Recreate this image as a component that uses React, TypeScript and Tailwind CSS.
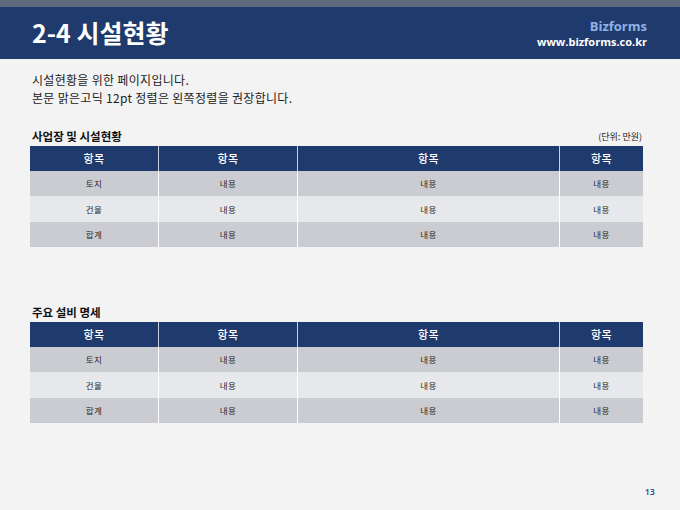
import React from "react";

const KR = { fontFamily: '"Noto Sans CJK KR", "Noto Sans", sans-serif' };
const EN = { fontFamily: '"Open Sans", "Noto Sans", sans-serif' };

const cols = "grid grid-cols-[128px_139px_262px_84px]";

function Table() {
  const rows = [
    { label: "토지", bg: "bg-[#cbccd1]", h: "h-[25px]" },
    { label: "건물", bg: "bg-[#e7e8eb]", h: "h-[26px]" },
    { label: "합계", bg: "bg-[#cbccd1]", h: "h-[25px]" },
  ];
  return (
    <div className="w-[613px]">
      <div className={`${cols} h-[25px] bg-[#1f3a6c]`}>
        {[0, 1, 2, 3].map((i) => (
          <div
            key={i}
            className={`flex items-center justify-center text-white text-[11px] font-medium tracking-[0.5px] ${
              i > 0 ? "border-l border-[#c9d1de]" : ""
            }`}
          >
            항목
          </div>
        ))}
      </div>
      {rows.map((r) => (
        <div key={r.label} className={`${cols} ${r.h} ${r.bg}`}>
          {[r.label, "내용", "내용", "내용"].map((t, i) => (
            <div
              key={i}
              className={`flex items-center justify-center text-[8.5px] tracking-[0.5px] text-[#2a2a2a] ${
                i > 0 ? "border-l border-white" : ""
              }`}
            >
              {t}
            </div>
          ))}
        </div>
      ))}
    </div>
  );
}

export default function App() {
  return (
    <div className="w-[680px] h-[510px] bg-[#f3f3f3] flex flex-col overflow-hidden" style={KR}>
      <div className="h-[7px] bg-[#5e6a7c]" />
      <div className="h-[52px] bg-[#1f3a6c] flex items-center justify-between pl-[32px] pr-[33px]">
        <div className="text-white text-[25px] font-bold leading-none pb-[2px]">2-4 시설현황</div>
        <div className="flex flex-col items-end leading-none" style={EN}>
          <div className="text-[#8fb3e6] text-[13px] font-bold mb-[3px]">Bizforms</div>
          <div className="text-white text-[11px] font-bold">www.bizforms.co.kr</div>
        </div>
      </div>
      <div className="flex flex-col px-[30px]">
        <div className="mt-[12px] pl-[2px] text-[12px] leading-[18px] tracking-[0.3px] text-[#222]">
          <div>시설현황을 위한 페이지입니다.</div>
          <div>본문 맑은고딕 12pt 정렬은 왼쪽정렬을 권장합니다.</div>
        </div>
        <div className="mt-[22px] h-[16px] flex items-center justify-between pl-[2px]">
          <div className="text-[11.5px] font-bold text-[#111]">사업장 및 시설현황</div>
          <div className="text-[9px] text-[#222] pr-[8px]">(단위: 만원)</div>
        </div>
        <div className="mt-[1px]">
          <Table />
        </div>
        <div className="mt-[58px] h-[16px] flex items-center pl-[2px]">
          <div className="text-[11.5px] font-bold text-[#111]">주요 설비 명세</div>
        </div>
        <div className="mt-[1px]">
          <Table />
        </div>
        <div className="mt-[62px] flex justify-end mr-[-5px]">
          <div className="text-[9px] font-semibold text-[#2b4a7e]" style={EN}>13</div>
        </div>
      </div>
    </div>
  );
}
